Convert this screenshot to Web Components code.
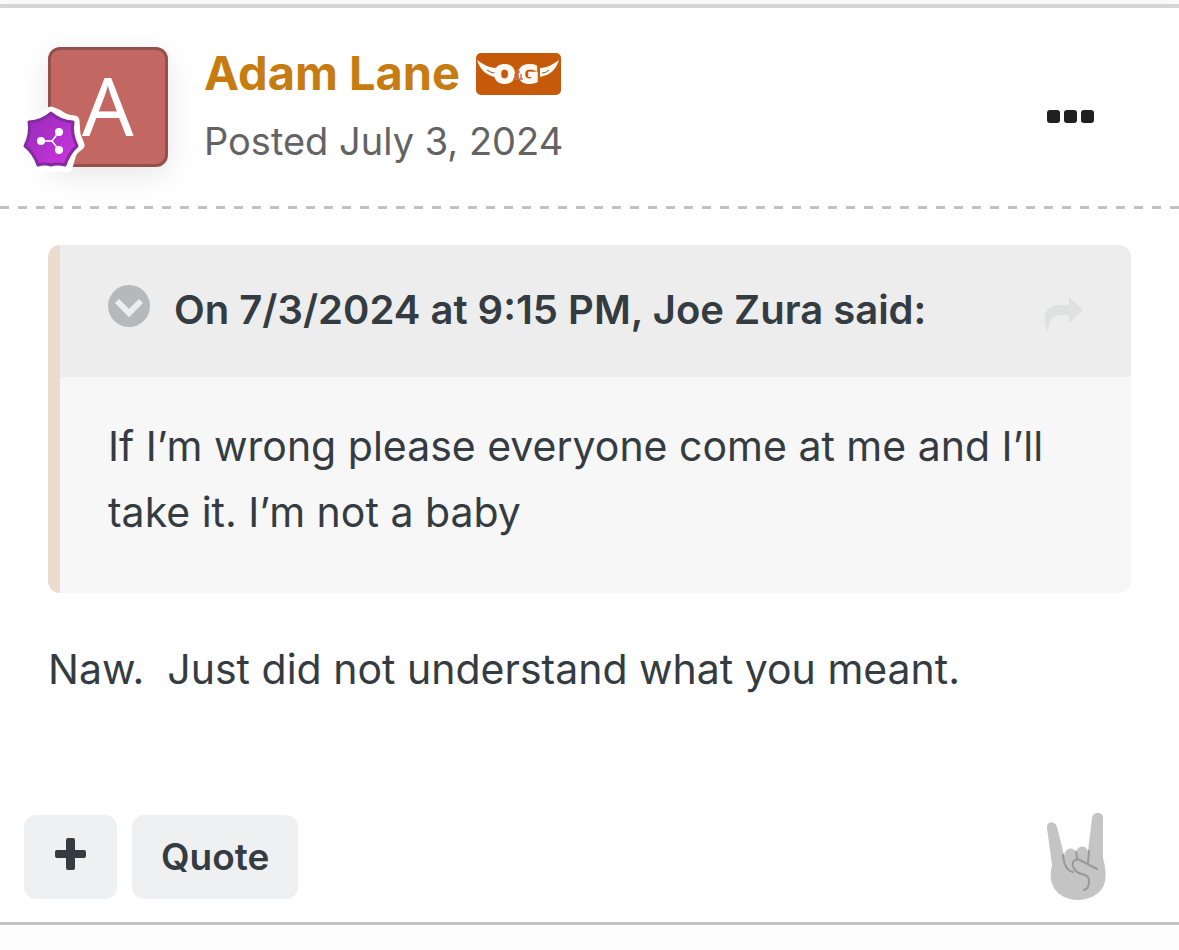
<!DOCTYPE html>
<html lang="en">
<head>
<meta charset="utf-8">
<meta name="viewport" content="width=device-width, initial-scale=1">
<title>Forum post</title>
<style>
body { margin: 0; padding-top: 4px; background: #fdfdfd; color: #353c41; font: 400 41px/66px Inter, "Liberation Sans", sans-serif; }
</style>
</head>
<body>
<forum-post>
  <post-header slot="header">
    <user-avatar slot="avatar">A</user-avatar>
    <a slot="name" href="#adam-lane">Adam Lane</a>
    <time slot="date" datetime="2024-07-03">Posted July 3, 2024</time>
  </post-header>
  <quote-block>
    <span slot="cite">On 7/3/2024 at 9:15 PM, Joe Zura said:</span>
    If I’m wrong please everyone come at me and I’ll take it. I’m not a baby
  </quote-block>
  <post-text>Naw.&nbsp; Just did not understand what you meant.</post-text>
  <post-actions slot="footer"></post-actions>
</forum-post>
<script>
const define = (name, html) => {
  const template = document.createElement('template');
  template.innerHTML = html;
  customElements.define(name, class extends HTMLElement {
    constructor() {
      super();
      this.attachShadow({ mode: 'open' }).append(template.content.cloneNode(true));
    }
  });
};

define('forum-post', `
<style>
  :host { display: block; background: #fff; border-top: 4px solid #d6d6d6; border-bottom: 3px solid #c3c3c3; box-shadow: 0 4px 14px rgba(0,0,0,.1); }
  .body { padding: 36px 48px 0; }
  .rule { height: 3px; background: repeating-linear-gradient(90deg, #c2c2c2 0 9px, transparent 9px 18px); }
</style>
<article>
  <slot name="header"></slot>
  <div class="rule"></div>
  <div class="body"><slot></slot></div>
  <slot name="footer"></slot>
</article>`);

define('post-header', `
<style>
  :host { display: flex; align-items: flex-start; gap: 36px; padding: 39px 84px 35px 48px; }
  .who { flex: 1; min-width: 0; }
  .line { display: flex; align-items: center; gap: 16px; height: 52px; }
  ::slotted(a) { color: #c77c11; font-size: 47px; line-height: 52px; font-weight: 700; text-decoration: none; }
  .date { margin-top: 12px; color: #636363; font-size: 38px; line-height: 60px; }
  button { display: block; border: 0; padding: 0; margin-top: 63px; background: none; color: #202020; }
  svg { display: block; }
</style>
<slot name="avatar"></slot>
<div class="who">
  <div class="line"><slot name="name"></slot><og-badge></og-badge></div>
  <div class="date"><slot name="date"></slot></div>
</div>
<button type="button" aria-label="More options">
  <svg width="49" height="14" viewBox="0 0 49 14" fill="currentColor"><rect x="1" y="0" width="13" height="13" rx="3"/><rect x="18" y="0" width="13" height="13" rx="3"/><rect x="35" y="0" width="13" height="13" rx="3"/></svg>
</button>`);

define('user-avatar', `
<style>
  :host { display: block; position: relative; box-sizing: border-box; width: 120px; height: 120px; border: 3px solid #95504e; border-radius: 12px; background: #c26761; box-shadow: 0 8px 30px rgba(0,0,0,.1); color: #fff; text-align: center; font: 400 81px/110px "Noto Sans", sans-serif; }
  svg { position: absolute; left: -29px; bottom: -9px; overflow: visible; }
</style>
<slot></slot>
<svg width="66" height="70" viewBox="0 0 66 70" role="img" aria-label="Rank">
  <defs><linearGradient id="g" x1="0" y1="0" x2="1" y2="1"><stop offset="0" stop-color="#942ab8"/><stop offset="1" stop-color="#cf36e0"/></linearGradient></defs>
  <path d="M29 9L36 12Q42 17 52 18L53 32L57 42Q49 47 48 54L45 64Q36 62 31 64Q26 62 19 64L14 57Q10 49 5 42L8 32L8 20Q21 17 29 9Z" fill="#fff" stroke="#fff" stroke-width="11" stroke-linejoin="round"/>
  <path d="M29 10Q38 18 51 19Q49 31 55 43Q47 50 43 62Q35 60 29 62Q23 60 16 62Q12 50 3 43Q9 31 7 19Q20 18 29 10Z" fill="url(#g)" stroke="#852aa0" stroke-width="3" stroke-linejoin="round"/>
  <path d="M19 38H30L37 29M30 38L37 47" fill="none" stroke="#fff" stroke-width="1.5"/>
  <circle cx="19" cy="38" r="4" fill="#fff"/><circle cx="37" cy="29" r="4" fill="#fff"/><circle cx="37" cy="47" r="4" fill="#fff"/>
</svg>`);

define('og-badge', `
<style>
  :host { display: block; width: 85px; height: 42px; margin-top: 2px; }
  svg { display: block; }
  text { font: 700 25px "DejaVu Sans", sans-serif; }
</style>
<svg width="85" height="42" viewBox="0 0 85 42">
  <rect width="85" height="42" rx="5" fill="#c55a0a"/>
  <path d="M1 7C7 11 12 15 21 15L20 24C11 23 4 17 1 7ZM83 7C77 11 72 15 64 15L64 24C74 22 80 17 83 7Z" fill="#fffaf4"/>
  <path d="M11 17Q15 20 19 20M73 17Q70 20 66 20" fill="none" stroke="#8b5b3c"/>
  <text x="18" y="30" fill="#fffaf4" stroke="#fffaf4" stroke-width="2">O</text><text x="42" y="30" fill="#fffaf4" stroke="#fffaf4" stroke-width="2">G</text>
  <path d="M42 16V27M39 21V26M45 21V26M37 26H47M40 19H44" fill="none" stroke="#c8705c" stroke-width="1.5"/>
</svg>`);

define('quote-block', `
<style>
  :host { display: block; border-left: 12px solid #ecdcd0; border-radius: 12px; background: #f7f7f7; overflow: hidden; }
  header { display: flex; align-items: center; box-sizing: border-box; height: 132px; padding: 0 48px 3px; background: #ededed; font-weight: 600; font-size: 40px; }
  button, a { display: block; flex: none; padding: 0; border: 0; background: none; }
  button { margin: 0 24px 8px 0; }
  a { margin: 10px 0 0 auto; }
  svg { display: block; }
  blockquote { margin: 0; padding: 36px 48px 48px; }
</style>
<header>
  <button type="button" aria-label="Collapse quote"><svg width="42" height="42" viewBox="0 0 42 42"><circle cx="21" cy="21" r="21" fill="#b6b8b9"/><path d="M9 16L21 28L33 16" fill="none" stroke="#ededed" stroke-width="6"/></svg></button>
  <slot name="cite"></slot>
  <a href="#quoted-post" aria-label="Go to quoted post"><svg width="40" height="36" viewBox="0 0 40 36"><path d="M26 0L40 13L26 26V18H18C9 18 6 23 5 35C-3 20 3 8 16 8H26Z" fill="#dfe0e0"/></svg></a>
</header>
<blockquote><slot></slot></blockquote>`);

define('post-text', `
<style>:host { display: block; margin-top: 43px; }</style>
<slot></slot>`);

define('post-actions', `
<style>
  :host { display: flex; align-items: center; gap: 15px; margin-top: 113px; padding: 0 72px 23px 24px; }
  button { display: flex; align-items: center; justify-content: center; height: 84px; border: 0; border-radius: 12px; padding: 0 29px; background: #eff0f2; color: #353c41; font: 600 37px/48px Inter, sans-serif; }
  .react { margin-left: auto; padding: 0; background: none; }
  .add { padding: 0 30px 6px; }
  svg { display: block; }
</style>
<button class="add" type="button" aria-label="Multiquote"><svg width="33" height="32" viewBox="0 0 33 32"><rect x="12" y="0" width="9" height="32" rx="2" fill="currentColor"/><rect x="1" y="12" width="31" height="8" rx="2" fill="currentColor"/></svg></button>
<button type="button">Quote</button>
<button class="react" type="button" aria-label="React"><svg width="61" height="88" viewBox="0 0 61 88">
  <path d="M1 15C0 8 9 7 11 14L18 42C20 34 28 34 30 39C32 32 40 32 42 38L46 5C47-2 57-2 57 5V45C60 56 61 66 57 74C47 91 18 91 8 75C4 68 4 62 6 52Z" fill="#c4c4c4"/>
  <path d="M17 42C18 52 21 58 27 59M43 38L42 50M31 47Q31 41 30 39" fill="none" stroke="#999" stroke-width="2" stroke-linecap="round"/>
  <path d="M51 56L34 47C27 44 24 52 30 58C35 63 44 60 43 69C43 73 41 76 38 77" fill="none" stroke="#999" stroke-width="2" stroke-linecap="round"/>
</svg></button>`);
</script>
</body>
</html>
